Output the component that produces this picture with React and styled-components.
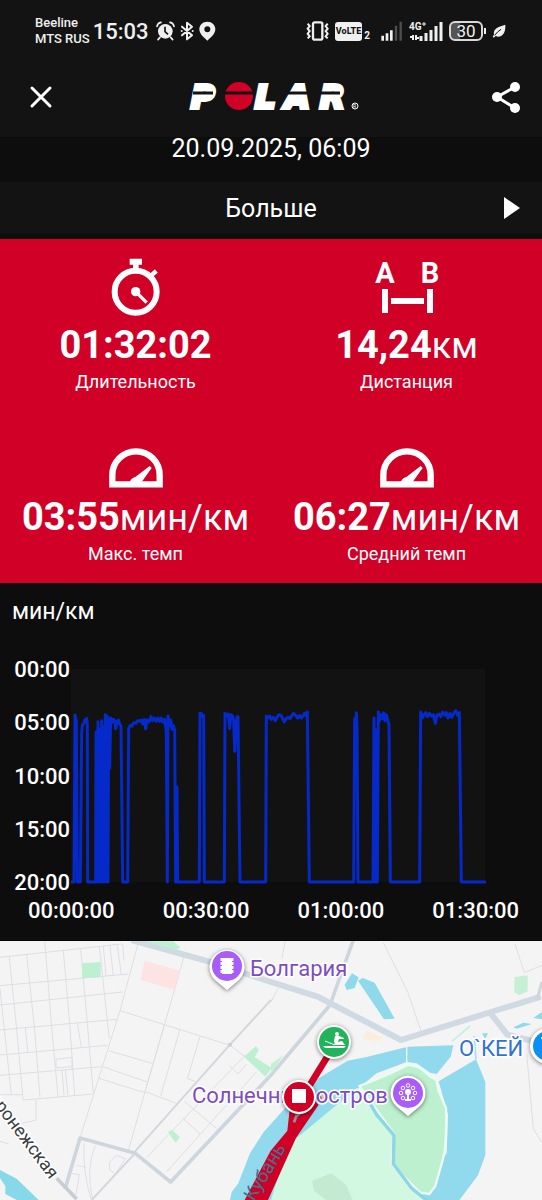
import React from "react"
import styled, { createGlobalStyle } from "styled-components"

const metrics = [
  { icon: "stopwatch", value: "01:32:02", unit: "", label: "Длительность" },
  { icon: "distance", value: "14,24", unit: "км", label: "Дистанция" },
  { icon: "gauge", value: "03:55", unit: "мин/км", label: "Макс. темп" },
  { icon: "gauge", value: "06:27", unit: "мин/км", label: "Средний темп" },
]

const paceTicks = ["00:00", "05:00", "10:00", "15:00", "20:00"]
const timeTicks = ["00:00:00", "00:30:00", "01:00:00", "01:30:00"]

const paceLine = `
  213,696 222,696 225,195 229,215 232,696 241,696 245,250 247,225 251,222 254,210 258,216 260,205
  262,225 263,696 287,696 288,246 291,696 294,215 297,696 299,238 302,696 305,212 308,696 311,230
  314,696 316,194 319,696 321,198 324,696 326,204 329,355 332,204 336,218 340,208 344,212 347,236
  351,216 355,210 359,222 363,228 368,696 383,696 386,236 391,226 396,228 401,218 407,220 413,212
  418,214 423,210 428,222 433,208 437,236 441,210 447,216 453,200 458,212 463,204 469,214 474,204
  479,214 484,204 489,216 494,208 499,246 502,696 504,198 508,228 512,210 516,238 520,226 524,240
  527,696 531,410 533,696 598,696 600,190 604,190 608,200 611,196 613,696 673,696 675,190 680,198
  685,192 689,236 693,194 697,198 701,210 704,304 708,240 711,200 714,200 720,696 797,696
  799,198 804,204 809,198 814,208 820,202 826,212 832,200 838,194 843,196 848,206 853,216 858,206
  864,202 870,206 876,196 881,190 887,196 893,204 899,196 904,204 909,198 914,190 919,198 922,186
  928,696 1061,696 1064,206 1067,260 1069,188 1071,230 1074,696 1119,696 1122,204 1126,696 1129,240
  1132,696 1135,186 1139,212 1143,194 1148,206 1151,188 1155,212 1159,194 1163,210 1167,224
  1171,696 1259,696 1262,186 1267,204 1272,194 1277,188 1282,200 1288,190 1294,198 1300,194
  1306,220 1311,196 1317,192 1322,200 1328,186 1334,196 1339,188 1344,204 1350,190 1355,202
  1361,190 1367,182 1373,196 1378,188 1384,696 1458,696
`

const StatusBar = () => (
  <StyledStatusBar>
    <StatusGroup>
      <Carriers>
        <span>Beeline</span>
        <span>MTS RUS</span>
      </Carriers>
      <Clock>15:03</Clock>
      <svg width="19" height="20" viewBox="0 0 57 60" aria-hidden="true">
        <circle cx="28" cy="31" r="22" fill="#f0f0f0" />
        <path d="M3 16Q5 6 15 4M42 4Q52 6 54 16M12 49l-6 7M44 49l6 7" stroke="#f0f0f0" strokeWidth="5" fill="none" strokeLinecap="round" />
        <path d="M27 17v15l9 8" stroke="#131313" strokeWidth="5" fill="none" />
      </svg>
      <svg width="14" height="20" viewBox="0 0 42 60" aria-hidden="true">
        <path d="M6 17l30 26-15 12V5l15 12L6 43" stroke="#f0f0f0" strokeWidth="6" fill="none" strokeLinejoin="round" strokeLinecap="round" />
        <circle cx="5" cy="30" r="3" fill="#f0f0f0" />
        <circle cx="38" cy="30" r="3" fill="#f0f0f0" />
      </svg>
      <svg width="17" height="20" viewBox="0 0 51 60" aria-hidden="true">
        <path fillRule="evenodd" d="M25 2C11 2 1 12 1 25c0 14 15 26 24 34 9-8 24-20 24-34C49 12 39 2 25 2zm0 14a9 9 0 1 1 0 18 9 9 0 0 1 0-18z" fill="#f0f0f0" />
      </svg>
    </StatusGroup>
    <StatusGroup>
      <svg width="24" height="20" viewBox="0 0 72 60" aria-hidden="true">
        <rect x="21" y="4" width="28" height="52" rx="5" fill="none" stroke="#f0f0f0" strokeWidth="7" />
        <path d="M5 8l6 7-6 8 6 7-6 8 6 8-6 6M65 8l-6 7 6 8-6 7 6 8-6 8 6 6" stroke="#f0f0f0" strokeWidth="6" fill="none" />
      </svg>
      <Volte>VoLTE</Volte>
      <SimIndex>2</SimIndex>
      <svg width="24" height="20" viewBox="0 0 72 60" aria-hidden="true">
        <path d="M8 44v15M21 37v22M34 28v31" stroke="#f0f0f0" strokeWidth="8" />
        <path d="M48 14v45M62 2v57" stroke="#4d4d4d" strokeWidth="7" />
      </svg>
      <svg width="33" height="20" viewBox="0 0 33 20" aria-hidden="true">
        <text x="0" y="9" fontSize="10" fontWeight="700" fill="#f0f0f0">4G</text>
        <path d="M15 1v4M13 3h4" stroke="#f0f0f0" strokeWidth="1" />
        <path d="M4 14v5M7 14v5M1 16h3M7 17h3" stroke="#f0f0f0" strokeWidth="2" />
        <path d="M12 15v5M17 12v8M22 9v11M27 5v15M32 1v19" stroke="#f0f0f0" strokeWidth="3" />
      </svg>
      <Battery>30</Battery>
      <svg width="14" height="14" viewBox="0 0 42 42" aria-hidden="true">
        <path d="M40 2c1 20-5 35-22 36-4 0-6-1-8-2l-4 5-4-3 4-6C2 12 22 8 40 2z" fill="#f0f0f0" />
        <path d="M8 34q8-11 19-18" stroke="#131313" strokeWidth="3" fill="none" />
      </svg>
    </StatusGroup>
  </StyledStatusBar>
)

const Logo = () => (
  <svg width="174" height="48" viewBox="0 0 174 48" role="img" aria-label="Polar">
    <LogoText>
      <text x="4" y="35">P</text>
      <text x="68" y="35">L</text>
      <text x="98" y="35">A</text>
      <text x="133" y="35">R</text>
    </LogoText>
    <circle cx="52" cy="23" r="14" fill="#d10027" />
    <path d="M6 20h20M38 20h28M96 20h25M133 20h20" stroke="#131313" strokeWidth="3" />
    <circle cx="168" cy="33" r="3" fill="none" stroke="#fff" />
    <text x="166" y="35" fontSize="5" fill="#fff">R</text>
  </svg>
)

const MetricIcon = ({ name }) => {
  if (name === "stopwatch") {
    return (
      <svg width="50" height="58" viewBox="0 0 150 174" aria-hidden="true">
        <circle cx="74" cy="101" r="63" fill="none" stroke="#fff" strokeWidth="18" />
        <path d="M56 2h37v18H83v14H66V20H56z" fill="#fff" />
        <path d="M120 53l16-14" stroke="#fff" strokeWidth="13" />
        <circle cx="74" cy="101" r="14" fill="#fff" />
        <path d="M74 101l33 33" stroke="#fff" strokeWidth="10" />
      </svg>
    )
  }
  if (name === "distance") {
    return (
      <svg width="64" height="58" viewBox="0 0 64 58" aria-hidden="true">
        <text x="10" y="25" fontSize="29" fontWeight="700" fill="#fff" textAnchor="middle">A</text>
        <text x="55" y="25" fontSize="29" fontWeight="700" fill="#fff" textAnchor="middle">B</text>
        <path d="M10 31v24M55 31v24" stroke="#fff" strokeWidth="6" />
        <path d="M16 43h33" stroke="#fff" strokeWidth="6" />
      </svg>
    )
  }
  return (
    <svg width="54" height="40" viewBox="0 0 162 120" aria-hidden="true">
      <path d="M10 109V81a71 71 0 0 1 142 0v28z" fill="none" stroke="#fff" strokeWidth="19" />
      <path d="M62 110q-2-18 18-24l42-32 6 6-30 42v8z" fill="#fff" />
    </svg>
  )
}

const Map = () => (
  <StyledMap viewBox="0 1 542 259" role="img" aria-label="Карта маршрута">
    <rect width="542" height="260" fill="#f4f4f5" />
    <g transform="scale(0.33333)" fill="none">
      <g stroke="#dddfe3" strokeWidth="3">
        <path d="M0 52L365 12M0 137L385 102M0 195L368 156M0 270L350 238M0 345L322 316M0 406L305 380M0 464h68l2 16L280 462" />
        <path d="M28 50l22 218 18 196M80 44l24 226 16 202M134 0l20 250 20 220M190 32l20 230 14 204M242 26l20 224 18 212M298 20l30 276M330 18l10 90M352 16l12 88" />
        <path d="M0 146l34 318M76 264l8 76M232 248l12 74M168 358l48-6v34M168 358v26l48-4M310 18l8 90M368 12l4 50M196 390l8 76M186 390l6 76" />
        <path d="M414 12L360 212 240 594M552 50L494 252 435 455 384 636M360 212l330 104M494 252L435 455l92 34M326 332l130 38M308 380l134 46M294 414l140 44M540 268l-58 200M600 290l-38 126 24 8" />
        <path d="M553 484l98 82M735 346L440 652M770 395L500 695M690 378l24 24 26-30M548 534l52 48M690 316l48 36M108 480v60l-50 12M0 604l26 8M252 610q-4 90 22 170M286 616q-30 70-8 164M230 676l28 6M216 700l22 4-10 60M330 664l20-18 26 10-30 46-18-14z" />
        <path d="M1150 8l74 150 40 118M856 0l-10 56M1545 12l28 86 53-22M1580 340l20 226 26 42M813 186l22-44" />
      </g>
      <path d="M400 640L690 314 813 180M275 780l130-140" stroke="#d3d7dc" strokeWidth="6" />
      <path d="M195 748l45-154 166 46 106 86L813 405 990 195 1060 0" stroke="#ced6dd" strokeWidth="11" strokeLinejoin="round" />
      <path d="M170 715l60 62" stroke="#c8cdd3" strokeWidth="11" />
      <path d="M395 0l230 64 188 62 140 44 250 130 270-84 150-46M1470 218l52 66 104 26" stroke="#d0dae2" strokeWidth="18" strokeLinejoin="round" />
      <path d="M1610 180l16-54" stroke="#d0d5da" strokeWidth="9" />
      <circle cx="690" cy="314" r="6" fill="#c9cfd5" />

      <path d="M246 70l56-4v46l-56 3zM440 4h80l22 20-20 6zM732 350l36-32 8 12-12 22 52 32-20 26zM504 576l12-6 24 22-14 16z" fill="#bdf0d0" />
      <path d="M1543 112l40-6v48l-26 12-14-10zM813 372l36-26-36 56z" fill="#c4f0d4" />
      <path d="M434 62l106 30-18 58-100-30z" fill="#fde3e2" />
      <path d="M1100 272l48 18-14 14-46-8z" fill="#faeedb" />

      <path d="M0 690l50 26 66 64H50l-34-18V738L0 714z" fill="#87d9ea" />
      <path d="M1034 134l22-34 20 12-12 32-24 6zM1074 122l14-8 36 14 60 108-32 2zM1540 262l30-14 26 4-46 14zM1600 234l26-18v22zM1446 280h18l-8 16z" fill="#8edaeb" />
      <path d="M690 780l5-24 20-26 35-90 41-64 102-114 50-40 100-60 60-12 120-30 137-4-8 34-42 52-20-4-40-28-30-4-90 34-160 130-160 284z" fill="#91daee" />
      <path d="M1316 424l112-66 10 24 18 44v220l-22 60-60 80h-124l50-90 40-56 4-116z" fill="#91daee" />
      <path d="M1428 358l-6-70" stroke="#a6e1ea" strokeWidth="5" />
      <path d="M1356 304l54-46" stroke="#c7eee2" strokeWidth="5" />

      <path d="M813 780q25-90 70-180l188-156 62 50 60 96-6 86 86 104z" fill="#d3f8e2" />
      <path d="M936 722l58-22 44 34 20 46h-80l-36-28z" fill="#c4ebd1" />
      <path d="M1078 438q90-34 146-64l34 8 36 30 14 6 8 36 22 50q4 120-14 170l-18 64-18 24-28-4-82-82-4-10 10-82z" fill="#bdf0cf" stroke="#ecfaf1" strokeWidth="7" strokeLinejoin="round" />
      <path d="M1110 490l20 34 52 62-2 86 56 74 50 40" stroke="#8dd6e8" strokeWidth="10" />
      <path d="M1220 310v64" stroke="#f4f4f5" strokeWidth="4" />

      <path d="M985 345l-80 130" stroke="#d10027" strokeWidth="20" />
      <path d="M870 500l-8 72-50 60-78 148h70l84-186 68-100-40-36z" fill="#d10027" />
      <path d="M878 546l8-22 20-4-14 12-6 16z" fill="#9c8f9c" />
      <circle cx="958" cy="474" r="13" fill="#e7b9b8" />
      <circle cx="958" cy="474" r="7" fill="#b92b3c" />
    </g>

    <MapLabel x="250" y="36">Болгария</MapLabel>
    <MapLabel x="192" y="163">Солнечный остров</MapLabel>
    <MapLabel x="459" y="116" $color="#2f72d4">О`КЕЙ</MapLabel>
    <StreetLabel transform="translate(50 240) rotate(53)" textAnchor="end">Воронежская</StreetLabel>
    <RiverLabel transform="translate(254 262) rotate(-59)">Кубань</RiverLabel>

    <Pin>
      <path d="M227 50l-12-10a17.500 17.500 0 1 1 24 0z" fill="#fff" />
      <circle cx="227" cy="26" r="15" fill="#a95cf7" />
      <path d="M222 18h10v16h-10z" fill="#fff" />
      <path d="M222 18v16M232 18v16" stroke="#fff" strokeWidth="3" strokeDasharray="3 1" />
    </Pin>
    <Pin>
      <path d="M408 176l-12-10a17.500 17.500 0 1 1 24 0z" fill="#fff" />
      <circle cx="408" cy="153" r="15" fill="#a95cf7" />
      <g fill="none" stroke="#fff">
        <circle cx="408" cy="145.500" r="1.800" />
        <circle cx="403" cy="148" r="1.800" />
        <circle cx="413" cy="148" r="1.800" />
        <circle cx="401" cy="153" r="1.800" />
        <circle cx="415" cy="153" r="1.800" />
        <circle cx="403" cy="158" r="1.800" />
        <circle cx="413" cy="158" r="1.800" />
      </g>
      <circle cx="408" cy="152" r="3" fill="#fff" />
      <path d="M408 152v7M405 160h6" stroke="#fff" strokeWidth="2" />
    </Pin>
    <Pin>
      <circle cx="548" cy="106" r="18" fill="#fff" />
      <circle cx="548" cy="106" r="15" fill="#0a8ff8" />
      <path d="M541 98h3" stroke="#fff" strokeWidth="2" />
    </Pin>
    <Pin>
      <circle cx="334" cy="102" r="17" fill="#fff" />
      <circle cx="334" cy="102" r="15" fill="#22b35c" />
      <circle cx="337" cy="94" r="2" fill="#fff" />
      <path d="M335 96h4l5 2v1h-5l-1 3 4-1 3 4h-10l-1-4z" fill="#fff" />
      <path d="M325 101l10 4" stroke="#fff" strokeWidth="1" />
      <path d="M323 106h23l-2 2h-19z" fill="#fff" />
    </Pin>
    <Pin>
      <circle cx="299" cy="157" r="17" fill="#fff" />
      <circle cx="299" cy="157" r="15" fill="#d10027" />
      <rect x="292" y="149" width="14" height="14" fill="#fff" />
    </Pin>
  </StyledMap>
)

const App = () => {
  return (
    <Page>
      <GlobalStyle />
      <Top>
        <StatusBar />
        <Header>
          <IconButton type="button" aria-label="Закрыть">
            <svg width="22" height="22" viewBox="0 0 22 22">
              <path d="M2 2l18 18M20 2L2 20" stroke="#fff" strokeWidth="3" strokeLinecap="round" />
            </svg>
          </IconButton>
          <Logo />
          <IconButton type="button" aria-label="Поделиться">
            <svg width="30" height="32" viewBox="0 0 30 32">
              <path d="M24 6L6 16l18 11" stroke="#fff" strokeWidth="3" fill="none" />
              <circle cx="24" cy="6" r="5" fill="#fff" />
              <circle cx="6" cy="16" r="5" fill="#fff" />
              <circle cx="24" cy="27" r="5" fill="#fff" />
            </svg>
          </IconButton>
        </Header>
      </Top>
      <DateLine>20.09.2025, 06:09</DateLine>
      <MoreButton type="button">
        <span>Больше</span>
        <svg width="16" height="24" viewBox="0 0 16 24" aria-hidden="true">
          <path d="M0 1l16 11L0 23z" fill="#fff" />
        </svg>
      </MoreButton>
      <Metrics>
        {metrics.map((metric) => (
          <Metric key={metric.label}>
            <div className="icon">
              <MetricIcon name={metric.icon} />
            </div>
            <p className="value">
              <strong>{metric.value}</strong>
              {metric.unit}
            </p>
            <p className="label">{metric.label}</p>
          </Metric>
        ))}
      </Metrics>
      <Chart>
        <h2>мин/км</h2>
        <div className="body">
          <PaceAxis>
            {paceTicks.map((tick) => (
              <span key={tick}>{tick}</span>
            ))}
          </PaceAxis>
          <Plot viewBox="213 57 1242 639" preserveAspectRatio="none" role="img" aria-label="Темп">
            <polyline points={paceLine} />
          </Plot>
        </div>
        <TimeAxis>
          {timeTicks.map((tick) => (
            <span key={tick}>{tick}</span>
          ))}
        </TimeAxis>
      </Chart>
      <Map />
    </Page>
  )
}

const GlobalStyle = createGlobalStyle`
  * {
    box-sizing: border-box;
  }
  body {
    margin: 0;
    background: #0d0d0d;
    font-family: Roboto, "Noto Sans", sans-serif;
    color: #fff;
  }
  h2, p {
    margin: 0;
    font-weight: 400;
  }
  svg {
    flex-shrink: 0;
    overflow: visible;
  }
`

const Page = styled.main`
  width: 100%;
  overflow: hidden;
`

const Top = styled.div`
  background: #131313;
`

const StyledStatusBar = styled.div`
  display: flex;
  justify-content: space-between;
  align-items: center;
  height: 62px;
  padding: 0 36px 0 35px;
  color: #f0f0f0;
`

const StatusGroup = styled.div`
  display: flex;
  align-items: center;
  gap: 5px;
`

const Carriers = styled.div`
  display: flex;
  flex-direction: column;
  margin-right: -2px;
  font-size: 13px;
  line-height: 16px;
  font-weight: 500;
`

const Clock = styled.span`
  margin-right: 2px;
  font-size: 22px;
  font-weight: 500;
`

const Volte = styled.span`
  padding: 0 1px;
  border-radius: 3px;
  background: #f0f0f0;
  color: #131313;
  font-size: 9px;
  line-height: 19px;
  font-weight: 800;
`

const SimIndex = styled.span`
  align-self: flex-end;
  margin-left: -3px;
  margin-right: 5px;
  font-size: 10px;
  line-height: 10px;
  font-weight: 700;
`

const Battery = styled.span`
  position: relative;
  width: 34px;
  margin: 0 4px 0 2px;
  border: 2px solid #d8d8d8;
  border-radius: 6px;
  background: linear-gradient(to right, #555 30%, transparent 30%);
  font-size: 17px;
  line-height: 16px;
  text-align: center;
  &::after {
    content: "";
    position: absolute;
    top: 5px;
    right: -5px;
    width: 2px;
    height: 6px;
    background: #f0f0f0;
  }
`

const Header = styled.header`
  display: flex;
  justify-content: space-between;
  align-items: center;
  height: 75px;
  padding: 0 16px 6px 21px;
`

const IconButton = styled.button`
  display: flex;
  justify-content: center;
  align-items: center;
  width: 40px;
  height: 40px;
  padding: 0;
  border: none;
  background: none;
  cursor: pointer;
`

const LogoText = styled.g`
  font-family: "DejaVu Sans", sans-serif;
  font-size: 32px;
  font-weight: 700;
  font-style: italic;
  fill: #fff;
  stroke: #fff;
  stroke-width: 4px;
`

const DateLine = styled.p`
  height: 45px;
  font-size: 25px;
  line-height: 24px;
  text-align: center;
`

const MoreButton = styled.button`
  display: grid;
  grid-template-columns: 1fr auto 1fr;
  align-items: center;
  width: 100%;
  height: 52px;
  margin-bottom: 5px;
  padding: 0 22px;
  border: none;
  background: #131313;
  color: #fff;
  font-family: inherit;
  font-size: 25px;
  cursor: pointer;
  span {
    grid-column: 2;
  }
  svg {
    justify-self: end;
  }
`

const Metrics = styled.section`
  display: grid;
  grid-template-columns: 1fr 1fr;
  background: #d10027;
`

const Metric = styled.div`
  display: flex;
  flex-direction: column;
  align-items: center;
  padding: 17px 0;
  .icon {
    display: flex;
    align-items: flex-end;
    height: 60px;
  }
  .value {
    height: 44px;
    margin-top: 7px;
    font-size: 36px;
    line-height: 44px;
    strong {
      font-size: 38px;
      font-weight: 700;
    }
  }
  .label {
    margin-top: 3px;
    font-size: 18px;
    line-height: 24px;
  }
`

const Chart = styled.section`
  padding: 14px 0 18px;
  border-bottom: 1px solid #050505;
  h2 {
    padding-left: 12px;
    font-size: 23px;
    line-height: 30px;
  }
  .body {
    display: flex;
    margin-top: 32px;
    padding-right: 57px;
  }
`

const PaceAxis = styled.div`
  display: flex;
  flex-direction: column;
  justify-content: space-between;
  width: 71px;
  height: 235px;
  padding-right: 1px;
  font-size: 22px;
  line-height: 22px;
  font-weight: 500;
  text-align: right;
`

const Plot = styled.svg`
  flex: 1;
  min-width: 0;
  height: 213px;
  margin: 10px 0;
  background: #121212;
  polyline {
    fill: none;
    stroke: #0629c9;
    stroke-width: 3px;
    stroke-linejoin: round;
    vector-effect: non-scaling-stroke;
  }
`

const TimeAxis = styled.div`
  display: flex;
  justify-content: space-between;
  margin-top: 6px;
  padding: 0 23px 0 28px;
  font-size: 22px;
  line-height: 22px;
  font-weight: 500;
`

const StyledMap = styled.svg`
  display: block;
  width: 100%;
  height: auto;
  overflow: hidden;
`

const MapLabel = styled.text`
  font-size: 22px;
  fill: ${(props) => props.$color || "#7d4cc4"};
  stroke: #fff;
  stroke-width: 3px;
  paint-order: stroke;
`

const StreetLabel = styled.text`
  font-size: 18px;
  fill: #3a3d42;
  stroke: #fff;
  stroke-width: 3px;
  paint-order: stroke;
`

const RiverLabel = styled.text`
  font-size: 19px;
  fill: #45708a;
`

const Pin = styled.g`
  filter: drop-shadow(0 1px 2px rgba(0, 0, 0, 0.5));
`

export default App
